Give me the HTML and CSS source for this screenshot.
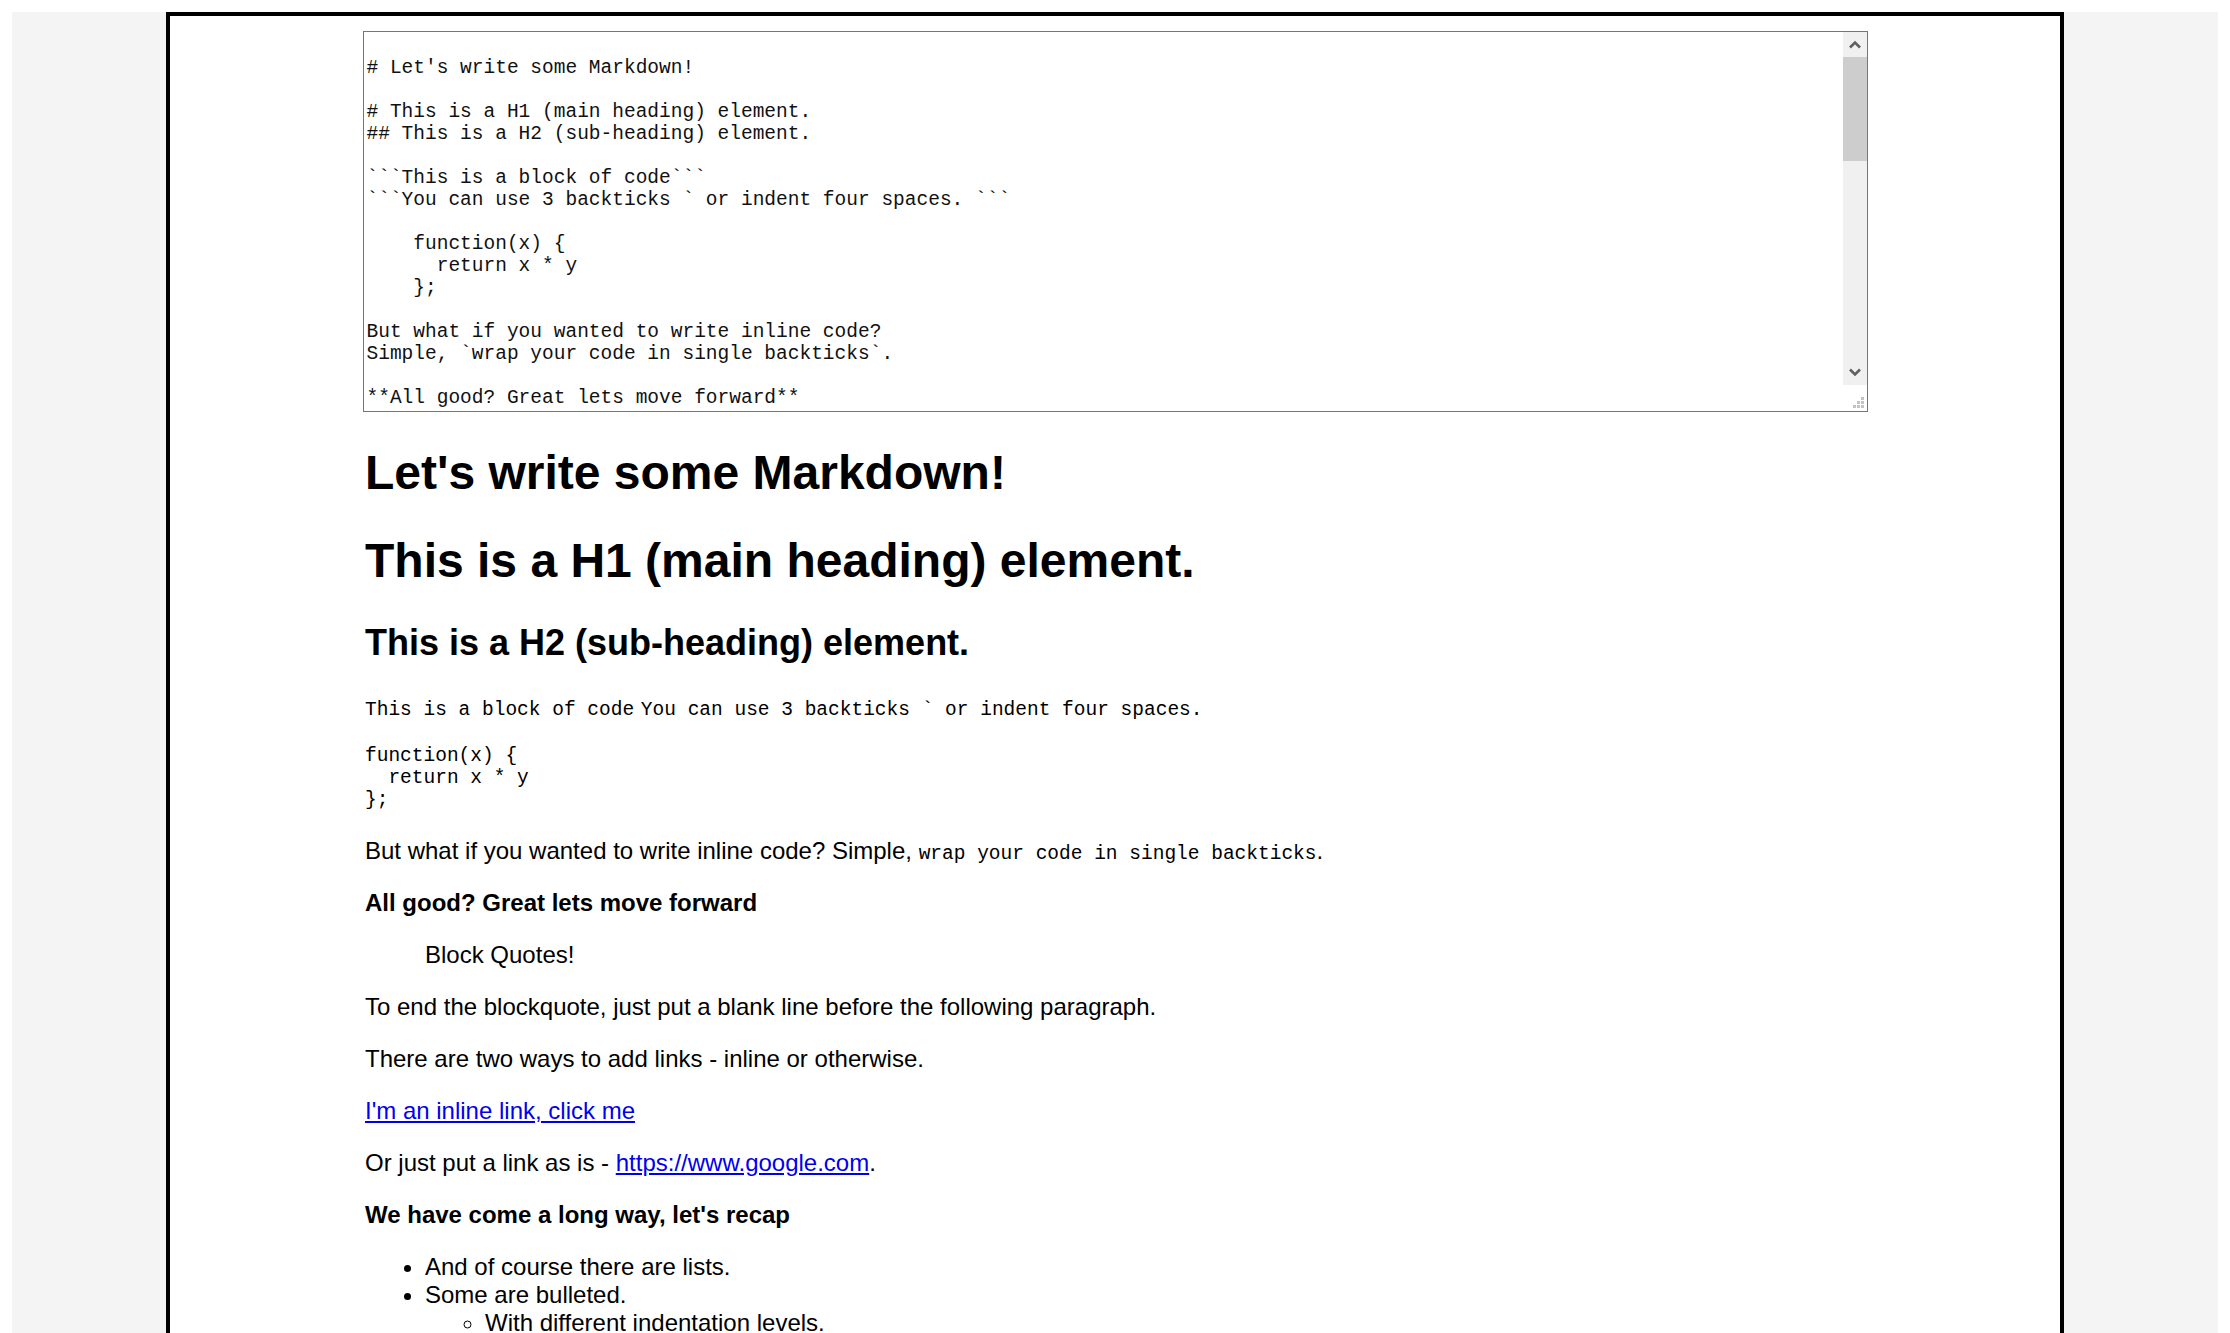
FILE: index.html
```html
<!DOCTYPE html>
<html lang="en">
<head>
<meta charset="utf-8">
<title>Markdown Previewer</title>
<link rel="stylesheet" href="styles.css">
</head>
<body>
<div class="page">
  <main class="frame">
    <div class="editor">
      <textarea class="editor-input" spellcheck="false" readonly>

# Let's write some Markdown!

# This is a H1 (main heading) element.
## This is a H2 (sub-heading) element.

```This is a block of code```
```You can use 3 backticks ` or indent four spaces. ```

    function(x) {
      return x * y
    };

But what if you wanted to write inline code?
Simple, `wrap your code in single backticks`.

**All good? Great lets move forward**

> Block Quotes!

To end the blockquote, just put a blank line before the following paragraph.

There are two ways to add links - inline or otherwise.

[I'm an inline link, click me](https://www.google.com)

Or just put a link as is - https://www.google.com.

**We have come a long way, let's recap**

* And of course there are lists.
* Some are bulleted.
   * With different indentation levels.
</textarea>
      <div class="scrollbar" aria-hidden="true">
        <div class="sb-btn">
          <svg width="12" height="9" viewBox="0 0 12 9"><polyline points="1,7.5 6,2.5 11,7.5" fill="none" stroke="#5f5f5f" stroke-width="2.6"/></svg>
        </div>
        <div class="sb-thumb"></div>
        <div class="sb-track"></div>
        <div class="sb-btn">
          <svg width="12" height="9" viewBox="0 0 12 9"><polyline points="1,1.5 6,6.5 11,1.5" fill="none" stroke="#5f5f5f" stroke-width="2.6"/></svg>
        </div>
        <div class="sb-corner">
          <svg width="12" height="12" viewBox="0 0 12 12"><g fill="#c4c4c4"><rect x="8" y="0" width="3" height="3"/><rect x="4" y="4" width="3" height="3"/><rect x="8" y="4" width="3" height="3"/><rect x="0" y="8" width="3" height="3"/><rect x="4" y="8" width="3" height="3"/><rect x="8" y="8" width="3" height="3"/></g></svg>
        </div>
      </div>
    </div>

    <div class="output">
      <h1>Let's write some Markdown!</h1>
      <h1>This is a H1 (main heading) element.</h1>
      <h2>This is a H2 (sub-heading) element.</h2>
      <p><code>This is a block of code</code> <code>You can use 3 backticks ` or indent four spaces. </code></p>
      <pre><code>function(x) {
  return x * y
};</code></pre>
      <p>But what if you wanted to write inline code? Simple, <code>wrap your code in single backticks</code>.</p>
      <p><strong>All good? Great lets move forward</strong></p>
      <blockquote><p>Block Quotes!</p></blockquote>
      <p>To end the blockquote, just put a blank line before the following paragraph.</p>
      <p>There are two ways to add links - inline or otherwise.</p>
      <p><a href="#">I'm an inline link, click me</a></p>
      <p>Or just put a link as is - <a href="#">https://www.google.com</a>.</p>
      <p><strong>We have come a long way, let's recap</strong></p>
      <ul>
        <li>And of course there are lists.</li>
        <li>Some are bulleted.
          <ul>
            <li>With different indentation levels.</li>
          </ul>
        </li>
      </ul>
    </div>
  </main>
</div>
</body>
</html>
```
FILE: styles.css
```css
html, body {
  background: #ffffff;
}
body {
  margin: 12px;
  font-family: "Liberation Sans", Arial, sans-serif;
  color: #000;
}
.page {
  background: #f4f4f4;
  min-height: 1400px;
}
.frame {
  width: 1890px;
  margin: 0 auto;
  background: #ffffff;
  border: 4px solid #000;
  padding: 15px 0 200px;
}
.editor {
  width: 1503px;
  height: 379px;
  margin: 0 auto;
  border: 1px solid #767676;
  display: flex;
  background: #fff;
}
.editor-input {
  flex: 1;
  border: none;
  outline: none;
  resize: none;
  overflow: hidden;
  margin: 0;
  padding: 3px 3px;
  font-family: "Courier New", "Liberation Mono", monospace;
  font-size: 19.5px;
  line-height: 22px;
  color: #111;
  background: #fff;
  white-space: pre;
}
.scrollbar {
  width: 24px;
  display: flex;
  flex-direction: column;
  background: #f0f0f0;
}
.sb-btn {
  height: 25px;
  display: flex;
  align-items: center;
  justify-content: center;
}
.sb-btn svg {
  display: block;
}
.sb-thumb {
  height: 104px;
  background: #cdcdcd;
}
.sb-track {
  flex: 1;
}
.sb-corner {
  height: 26px;
  background: #fff;
  display: flex;
  align-items: flex-end;
  justify-content: flex-end;
  padding: 0 2px 2px 0;
  box-sizing: border-box;
}
.output {
  width: 1505px;
  margin: 0 auto;
  font-size: 24px;
  padding-left: 2.5px;
  box-sizing: border-box;
}
.output h1 {
  font-size: 48px;
  line-height: 56px;
  margin: 32.5px 0;
  font-weight: bold;
}
.output h2 {
  font-size: 36px;
  margin: 29.88px 0;
  font-weight: bold;
}
.output p {
  margin: 24px 0;
}
.output code {
  font-family: "Courier New", "Liberation Mono", monospace;
  font-size: 19.5px;
}
.output pre {
  margin: 19.5px 0 25.5px;
  font-family: "Courier New", "Liberation Mono", monospace;
  font-size: 19.5px;
}
.output pre code {
  font-size: 19.5px;
}
.output blockquote {
  margin: 24px 60px;
}
.output a {
  color: #0000ee;
  text-decoration: underline;
}
.output ul {
  margin: 24px 0;
  padding-left: 60px;
}
.output ul ul {
  margin: 0;
  list-style-type: circle;
}
```
